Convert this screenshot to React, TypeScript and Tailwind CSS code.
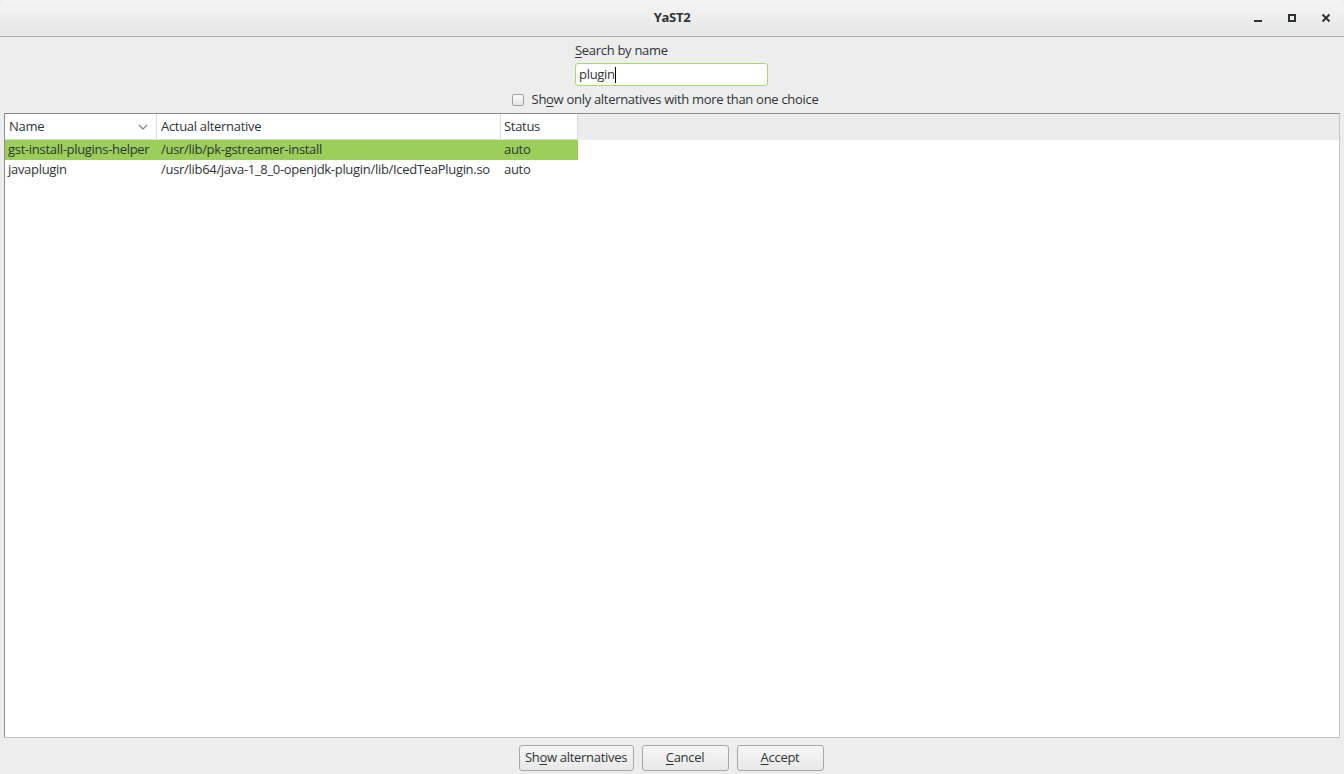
import React from 'react';

const rows = [
  { name: 'gst-install-plugins-helper', alt: '/usr/lib/pk-gstreamer-install', status: 'auto', selected: true },
  { name: 'javaplugin', alt: '/usr/lib64/java-1_8_0-openjdk-plugin/lib/IcedTeaPlugin.so', status: 'auto', selected: false },
];

const Btn: React.FC<{ pre?: string; u: string; post: string; w: string }> = ({ pre, u, post, w }) => (
  <button
    className={`h-[26px] ${w} rounded-[3px] border border-[#a8a8a8] bg-gradient-to-b from-[#f6f6f6] to-[#e8e8e8] text-[13px] text-[#2e3436] flex items-center justify-center`}
  >
    {pre}
    <span className="underline underline-offset-2">{u}</span>
    {post}
  </button>
);

export default function App() {
  return (
    <div className="w-[1344px] h-[774px] flex flex-col bg-[#ededed] text-[#2e3436] font-['Open_Sans',sans-serif] text-[13px] tracking-[-0.3px] overflow-hidden">
      {/* title bar */}
      <div className="h-[37px] shrink-0 rounded-t-[6px] border-b border-[#b0b0b0] bg-gradient-to-b from-[#f5f5f5] to-[#e6e6e6] flex items-center relative">
        <div className="flex-1 text-center font-bold text-[13px] text-[#2e3436]">YaST2</div>
        <div className="absolute right-[1px] top-0 h-[36px] flex items-center">
          <div className="w-[34px] flex justify-center">
            <div className="w-[8px] h-[2px] bg-[#2e3436] mt-[6px]" />
          </div>
          <div className="w-[34px] flex justify-center">
            <div className="w-[8px] h-[8px] border-2 border-[#2e3436]" />
          </div>
          <div className="w-[34px] flex justify-center">
            <svg width="10" height="10" viewBox="0 0 10 10">
              <path d="M1.5 1.5 L8.5 8.5 M8.5 1.5 L1.5 8.5" stroke="#2e3436" strokeWidth="2" />
            </svg>
          </div>
        </div>
      </div>

      {/* search */}
      <div className="flex flex-col items-center pt-[5px]">
        <div className="w-[193px] ml-[-1px]">
          <div className="h-[17px] leading-[17px]">
            <span className="underline underline-offset-2">S</span>earch by name
          </div>
          <div className="mt-[4px] h-[23px] rounded-[3px] border border-[#a6d970] bg-white flex items-center px-[3px]">
            <span>plugin</span>
            <span className="w-px h-[16px] bg-black" />
          </div>
        </div>
        <div className="mt-[5px] h-[17px] flex items-center ml-[-14px]">
          <div className="w-[12px] h-[12px] rounded-[2px] border border-[#a0a0a0] bg-gradient-to-b from-[#fafafa] to-[#e6e6e6]" />
          <span className="ml-[8px]">
            Sh<span className="underline underline-offset-2">o</span>w only alternatives with more than one choice
          </span>
        </div>
      </div>

      {/* table */}
      <div className="mt-[5px] ml-[4px] mr-[4px] h-[625px] border border-t-[#8c8c8c] border-l-[#8c8c8c] border-r-[#c4c4c4] border-b-[#c4c4c4] bg-white flex flex-col">
        <div className="h-[26px] flex bg-[#ececec]">
          <div className="w-[152px] bg-white border-r border-b border-[#dcdcdc] flex items-center pl-[4px] pr-[8px] justify-between">
            <span>Name</span>
            <svg width="10" height="6" viewBox="0 0 10 6">
              <path d="M1 1 L5 5 L9 1" stroke="#8a8a8a" strokeWidth="1.3" fill="none" />
            </svg>
          </div>
          <div className="w-[344px] bg-white border-r border-b border-[#dcdcdc] flex items-center pl-[4px]">Actual alternative</div>
          <div className="w-[77px] bg-white border-r border-b border-[#dcdcdc] flex items-center pl-[3px]">Status</div>
        </div>
        {rows.map((r) => (
          <div key={r.name} className={`h-[20px] w-[573px] flex items-center ${r.selected ? 'bg-[#9bcf5a]' : ''}`}>
            <div className="w-[152px] pl-[3px] whitespace-nowrap overflow-hidden">{r.name}</div>
            <div className="w-[344px] pl-[4px] whitespace-nowrap overflow-hidden">{r.alt}</div>
            <div className="w-[77px] pl-[3px] whitespace-nowrap">{r.status}</div>
          </div>
        ))}
      </div>

      {/* buttons */}
      <div className="mt-[7px] ml-[-2px] flex justify-center gap-[8px]">
        <Btn u="o" pre="Sh" post="w alternatives" w="w-[115px]" />
        <Btn u="C" post="ancel" w="w-[87px]" />
        <Btn u="A" post="ccept" w="w-[87px]" />
      </div>
    </div>
  );
}
